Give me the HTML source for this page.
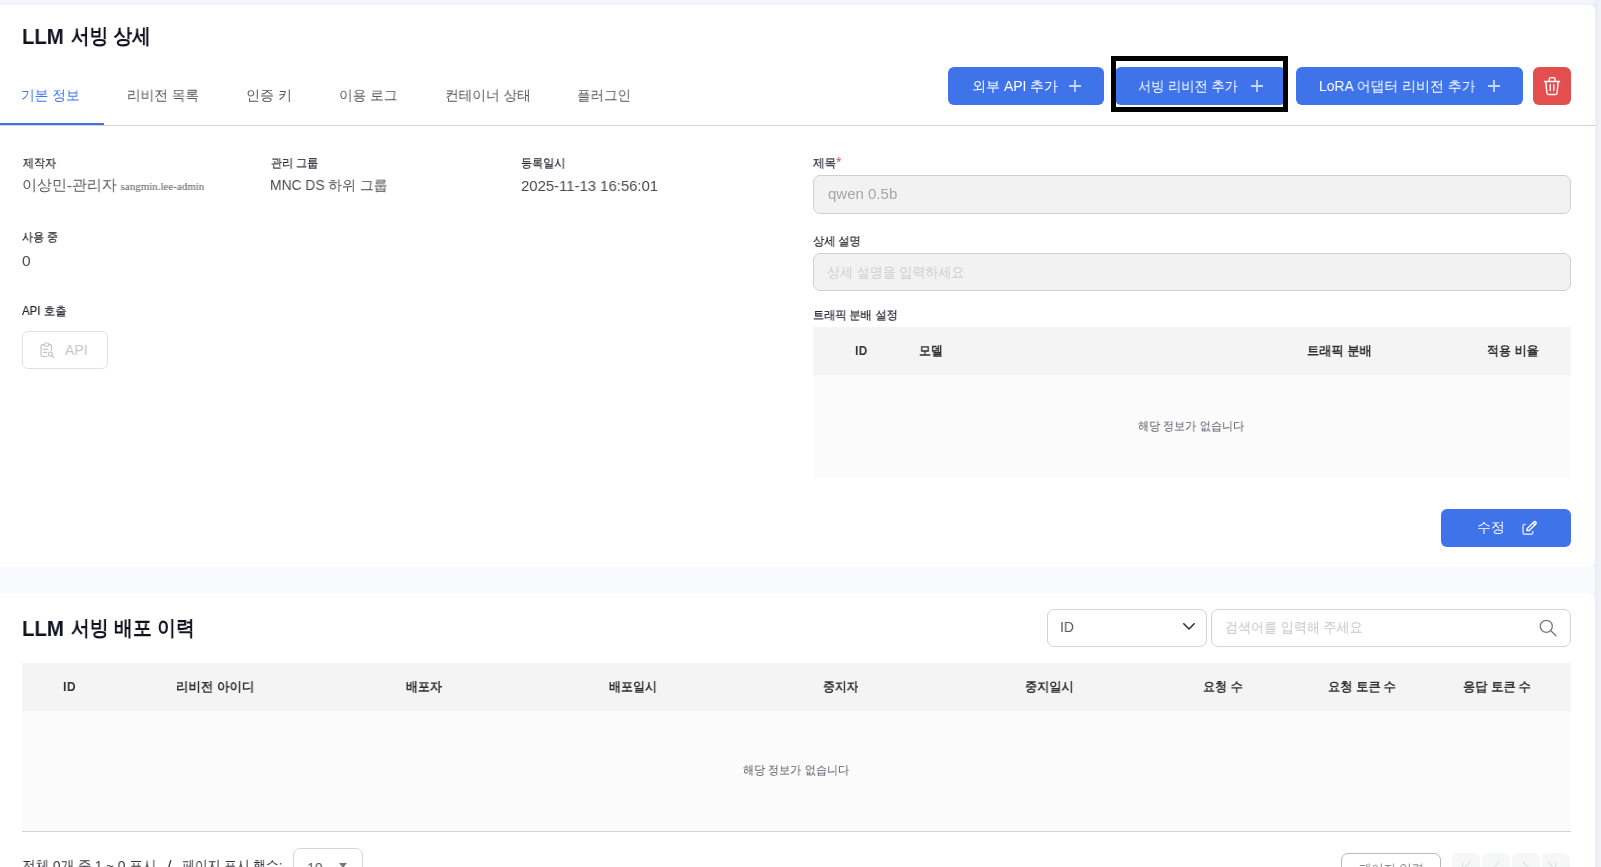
<!DOCTYPE html>
<html><head><meta charset="utf-8">
<style>
*{box-sizing:border-box;margin:0;padding:0}
html,body{width:1601px;height:867px;overflow:hidden;background:#f0f2f7;font-family:"Liberation Sans",sans-serif;color:#222}
.abs{position:absolute}
.t{position:absolute;white-space:nowrap;line-height:1;transform-origin:0 0;will-change:transform}
.lb{-webkit-text-stroke:0.2px currentColor}
.btn{position:absolute;background:#3e73ea;border-radius:6px}
svg{position:absolute;overflow:visible}
</style></head><body>
<div class="abs" style="left:0;top:0;width:1601px;height:5px;background:linear-gradient(#f4f7fc,#eff1f7)"></div>
<div class="abs" style="left:1595px;top:0;width:6px;height:867px;background:linear-gradient(90deg,#eaedf3,#f0f3f8)"></div>
<div class="abs" style="left:0;top:5px;width:1595px;height:562px;background:#fff;border-radius:0 6px 5px 0"></div>
<div class="abs" style="left:0;top:125px;width:1595px;height:1px;background:#d2d2d6"></div>
<div class="abs" style="left:0;top:123px;width:104px;height:2px;background:#3e73ea"></div>
<div class="btn" style="left:948px;top:67px;width:156px;height:38px"></div>
<svg style="left:1069px;top:80px" width="12" height="12"><path d="M6 0V12M0 6H12" stroke="#fff" stroke-opacity="0.72" stroke-width="1.8"/></svg>
<div class="btn" style="left:1115px;top:67px;width:171px;height:38px"></div>
<svg style="left:1251px;top:80px" width="12" height="12"><path d="M6 0V12M0 6H12" stroke="#fff" stroke-opacity="0.72" stroke-width="1.8"/></svg>
<div class="btn" style="left:1296px;top:67px;width:227px;height:38px"></div>
<svg style="left:1488px;top:80px" width="12" height="12"><path d="M6 0V12M0 6H12" stroke="#fff" stroke-opacity="0.72" stroke-width="1.8"/></svg>
<div class="btn" style="left:1533px;top:67px;width:38px;height:38px;background:#e24f4e"></div>
<svg style="left:1533px;top:67px" width="38" height="38" fill="none" stroke="#fff" stroke-width="1.4" stroke-linecap="round" stroke-linejoin="round">
<path d="M11.5 14.5H26.5"/>
<path d="M16.3 14.3V12.2a1.6 1.6 0 0 1 1.6-1.6H20.5a1.6 1.6 0 0 1 1.6 1.6V14.3"/>
<path d="M12.8 14.7L13.9 26a1.6 1.6 0 0 0 1.6 1.5H22.5a1.6 1.6 0 0 0 1.6-1.5L25.2 14.7"/>
<path d="M17.2 17.6V23.6M20.8 17.6V23.6"/>
</svg>
<div class="abs" style="left:22px;top:331px;width:86px;height:38px;border:1px solid #e2e2e6;border-radius:6px"></div>
<svg style="left:36px;top:338px" width="24" height="24" fill="none" stroke="#c2c2c9" stroke-width="1.15" stroke-linecap="round" stroke-linejoin="round">
<path d="M8.4 6.6H6.5a1.5 1.5 0 0 0-1.5 1.5V17a1.5 1.5 0 0 0 1.5 1.5H11"/>
<path d="M12.9 6.6H14a1.5 1.5 0 0 1 1.5 1.5V12.2"/>
<rect x="8.4" y="5" width="4.5" height="3.2" rx="1.2"/>
<path d="M7.5 11.3H11.6M7.5 14.4H10.6"/>
<circle cx="14.4" cy="16" r="2"/>
<path d="M15.9 17.5L17.8 19.4"/>
</svg>
<div class="abs" style="left:813px;top:175px;width:758px;height:39px;background:#f2f2f2;border:1px solid #cfcfd4;border-radius:7px"></div>
<div class="abs" style="left:813px;top:253px;width:758px;height:38px;background:#f2f2f2;border:1px solid #cfcfd4;border-radius:7px"></div>
<div class="abs" style="left:813px;top:327px;width:758px;height:48px;background:#f4f4f4"></div>
<div class="abs" style="left:813px;top:375px;width:758px;height:103px;background:#fbfbfb"></div>
<div class="btn" style="left:1441px;top:509px;width:130px;height:38px"></div>
<svg style="left:1518px;top:516px" width="24" height="24" fill="none" stroke="#fff" stroke-width="1.4" stroke-linecap="round" stroke-linejoin="round">
<path d="M7.3 8.4H6.4a1.4 1.4 0 0 0-1.4 1.4V16.8a1.4 1.4 0 0 0 1.4 1.4H13.4a1.4 1.4 0 0 0 1.4-1.4V15.4" stroke-opacity="0.78"/>
<path d="M15 6.9L16.9 8.8"/>
<path d="M9 14.6L9.3 12.6L15.9 6a1.3 1.3 0 0 1 1.9 1.9L11.2 14.5Z"/>
</svg>
<div class="abs" style="left:0;top:567px;width:1595px;height:26px;background:#f8fafe"></div>
<div class="abs" style="left:0;top:593px;width:1595px;height:274px;background:#fff;border-radius:0 6px 0 0"></div>
<div class="abs" style="left:1047px;top:609px;width:160px;height:38px;border:1px solid #d3d3d6;border-radius:7px"></div>
<svg style="left:1183px;top:623px" width="12" height="7" fill="none" stroke="#333" stroke-width="1.6" stroke-linecap="round" stroke-linejoin="round"><path d="M0.8 0.8L6 6L11.2 0.8"/></svg>
<div class="abs" style="left:1211px;top:609px;width:360px;height:38px;border:1px solid #d3d3d6;border-radius:7px"></div>
<svg style="left:1536px;top:616px" width="24" height="24" fill="none" stroke="#7c7c80" stroke-width="1.35" stroke-linecap="round"><circle cx="10.3" cy="10.3" r="6"/><path d="M14.6 14.6L20 19.7"/></svg>
<div class="abs" style="left:22px;top:663px;width:1549px;height:48px;background:#f4f4f4"></div>
<div class="abs" style="left:22px;top:711px;width:1549px;height:120px;background:#fbfbfb"></div>
<div class="abs" style="left:22px;top:831px;width:1549px;height:1px;background:#d2d2d6"></div>
<div class="abs" style="left:293px;top:848px;width:70px;height:40px;border:1px solid #d5d5d8;border-radius:7px"></div>
<svg style="left:338px;top:862px" width="12" height="8"><path d="M1 1H9L5 6Z" fill="#777"/></svg>
<div class="abs" style="left:1341px;top:853px;width:100px;height:40px;border:1px solid #b8b8bc;border-radius:7px"></div>
<div class="abs" style="left:1452px;top:853px;width:28px;height:30px;background:#f6f7f7;border-radius:6px"></div>
<div class="abs" style="left:1482px;top:853px;width:28px;height:30px;background:#f6f7f7;border-radius:6px"></div>
<div class="abs" style="left:1512px;top:853px;width:28px;height:30px;background:#f6f7f7;border-radius:6px"></div>
<div class="abs" style="left:1542px;top:853px;width:28px;height:30px;background:#f6f7f7;border-radius:6px"></div>
<div class="abs" style="left:1111px;top:56px;width:177px;height:56px;border:5px solid #000"></div>

<svg style="left:1452px;top:853px" width="120" height="20" fill="none" stroke="#e3e4e6" stroke-width="1.4" stroke-linecap="round" stroke-linejoin="round">
<path d="M10.5 9V20M18 9L13 14L18 19"/>
<path d="M47 9L42 14L47 19"/>
<path d="M71 9L76 14L71 19"/>
<path d="M96 9L101 14L96 19M103.5 9V20"/>
</svg>

<div class="t" id="title1" style="left:22.10px;top:26.00px;font-size:22.5px;font-weight:bold;color:#12121f;transform:scaleX(0.9015);">LLM</div>
<div class="t" id="title1b" style="left:71.00px;top:24.50px;font-size:21px;font-weight:bold;color:#12121f;transform:scaleX(0.8865);">서빙 상세</div>
<div class="t" id="tab1" style="left:21.42px;top:88.00px;font-size:14px;color:#3e73ea;transform:scaleX(0.9764);">기본 정보</div>
<div class="t" id="tab2" style="left:127.03px;top:88.00px;font-size:14px;color:#55555c;transform:scaleX(0.9728);">리비전 목록</div>
<div class="t" id="tab3" style="left:246.00px;top:88.00px;font-size:14px;color:#55555c;">인증 키</div>
<div class="t" id="tab4" style="left:338.61px;top:88.00px;font-size:14px;color:#55555c;transform:scaleX(0.9734);">이용 로그</div>
<div class="t" id="tab5" style="left:444.61px;top:88.00px;font-size:14px;color:#55555c;transform:scaleX(0.9748);">컨테이너 상태</div>
<div class="t" id="tab6" style="left:577.04px;top:88.00px;font-size:14px;color:#55555c;transform:scaleX(0.9638);">플러그인</div>
<div class="t" id="b1" style="left:971.59px;top:79.00px;font-size:14px;color:#fff;">외부 API 추가</div>
<div class="t" id="b2" style="left:1138.25px;top:79.00px;font-size:14px;color:#fff;transform:scaleX(0.9415);">서빙 리비전 추가</div>
<div class="t" id="b3" style="left:1319.41px;top:79.00px;font-size:14px;color:#fff;transform:scaleX(0.9904);">LoRA 어댑터 리비전 추가</div>
<div class="t lb" id="l1" style="left:22.51px;top:157.00px;font-size:12px;color:#242430;transform:scaleX(0.9199);">제작자</div>
<div class="t" id="v1" style="left:21.50px;top:178.00px;font-size:15px;color:#58585e;font-family:'Liberation Serif',serif;transform:scaleX(0.9975);">이상민-관리자 <span style="font-size:11px;font-family:'Liberation Serif',serif">sangmin.lee-admin</span></div>
<div class="t lb" id="l2" style="left:271.00px;top:157.00px;font-size:12px;color:#242430;transform:scaleX(0.9267);">관리 그룹</div>
<div class="t" id="v2" style="left:270.49px;top:178.00px;font-size:14px;color:#4a4a4f;transform:scaleX(0.9874);">MNC DS 하위 그룹</div>
<div class="t lb" id="l3" style="left:520.61px;top:157.00px;font-size:12px;color:#242430;transform:scaleX(0.9240);">등록일시</div>
<div class="t" id="v3" style="left:520.60px;top:178.00px;font-size:15px;color:#4a4a4f;transform:scaleX(0.9922);">2025-11-13 16:56:01</div>
<div class="t lb" id="l4" style="left:22.00px;top:231.00px;font-size:12px;color:#242430;transform:scaleX(0.9231);">사용 중</div>
<div class="t" id="v4" style="left:22.00px;top:252.50px;font-size:15px;color:#4a4a4f;transform:scaleX(1.0367);">0</div>
<div class="t lb" id="l5" style="left:21.93px;top:305.00px;font-size:12px;color:#242430;transform:scaleX(0.9497);">API 호출</div>
<div class="t" id="apit" style="left:64.79px;top:342.00px;font-size:15px;color:#c4c4ca;transform:scaleX(0.9374);">API</div>
<div class="t lb" id="l6" style="left:813.13px;top:157.00px;font-size:12px;color:#242430;transform:scaleX(0.9639);">제목<span style="color:#e24f4e;font-size:14px;line-height:0;-webkit-text-stroke:0">*</span></div>
<div class="t" id="qwen" style="left:827.50px;top:185.50px;font-size:15px;color:#a6a6ab;">qwen 0.5b</div>
<div class="t lb" id="l7" style="left:813.30px;top:235.00px;font-size:12px;color:#242430;transform:scaleX(0.9344);">상세 설명</div>
<div class="t" id="ph1" style="left:827.07px;top:265.00px;font-size:14px;color:#cdcdd2;transform:scaleX(0.9281);">상세 설명을 입력하세요</div>
<div class="t lb" id="l8" style="left:813.40px;top:309.00px;font-size:12px;color:#242430;transform:scaleX(0.9314);">트래픽 분배 설정</div>
<div class="t" id="th1" style="left:855.00px;top:344.00px;font-size:13px;font-weight:bold;color:#2e2e33;letter-spacing:0.6px;transform:scaleX(0.8926);">ID</div>
<div class="t" id="th2" style="left:919.10px;top:344.00px;font-size:13px;font-weight:bold;color:#2e2e33;transform:scaleX(0.9168);">모델</div>
<div class="t" id="th3" style="left:1307.18px;top:344.00px;font-size:13px;font-weight:bold;color:#2e2e33;transform:scaleX(0.9387);">트래픽 분배</div>
<div class="t" id="th4" style="left:1486.60px;top:344.00px;font-size:13px;font-weight:bold;color:#2e2e33;transform:scaleX(0.9219);">적용 비율</div>
<div class="t" id="e1" style="left:1138.40px;top:420.00px;font-size:12px;color:#5a5a64;transform:scaleX(0.9233);">해당 정보가 없습니다</div>
<div class="t" id="edit" style="left:1476.90px;top:519.50px;font-size:14px;color:#fff;transform:scaleX(0.9948);">수정</div>
<div class="t" id="title2" style="left:22.20px;top:618.00px;font-size:22.5px;font-weight:bold;color:#12121f;transform:scaleX(0.9056);">LLM</div>
<div class="t" id="title2b" style="left:71.00px;top:616.50px;font-size:21px;font-weight:bold;color:#12121f;transform:scaleX(0.8971);">서빙 배포 이력</div>
<div class="t" id="selid" style="left:1060.36px;top:619.00px;font-size:15px;color:#55555f;transform:scaleX(0.9189);">ID</div>
<div class="t" id="ph2" style="left:1224.86px;top:620.00px;font-size:14px;color:#c6c6cc;transform:scaleX(0.9294);">검색어를 입력해 주세요</div>
<div class="t" id="h1" style="left:63.42px;top:680.00px;font-size:13px;font-weight:bold;color:#2e2e33;letter-spacing:0.6px;transform:scaleX(0.9240);">ID</div>
<div class="t" id="h2" style="left:176.19px;top:680.00px;font-size:13px;font-weight:bold;color:#2e2e33;transform:scaleX(0.9558);">리비전 아이디</div>
<div class="t" id="h3" style="left:406.00px;top:680.00px;font-size:13px;font-weight:bold;color:#2e2e33;transform:scaleX(0.9185);">배포자</div>
<div class="t" id="h4" style="left:608.60px;top:680.00px;font-size:13px;font-weight:bold;color:#2e2e33;transform:scaleX(0.9238);">배포일시</div>
<div class="t" id="h5" style="left:823.00px;top:680.00px;font-size:13px;font-weight:bold;color:#2e2e33;transform:scaleX(0.9085);">중지자</div>
<div class="t" id="h6" style="left:1025.00px;top:680.00px;font-size:13px;font-weight:bold;color:#2e2e33;transform:scaleX(0.9357);">중지일시</div>
<div class="t" id="h7" style="left:1203.00px;top:680.00px;font-size:13px;font-weight:bold;color:#2e2e33;transform:scaleX(0.9245);">요청 수</div>
<div class="t" id="h8" style="left:1327.80px;top:680.00px;font-size:13px;font-weight:bold;color:#2e2e33;transform:scaleX(0.9416);">요청 토큰 수</div>
<div class="t" id="h9" style="left:1463.00px;top:680.00px;font-size:13px;font-weight:bold;color:#2e2e33;transform:scaleX(0.9416);">응답 토큰 수</div>
<div class="t" id="e2" style="left:743.10px;top:764.00px;font-size:12px;color:#5a5a64;transform:scaleX(0.9233);">해당 정보가 없습니다</div>
<div class="t" id="foot1" style="left:22.10px;top:858.00px;font-size:15px;color:#333338;transform:scaleX(0.9016);">전체 0개 중 1 ~ 0 표시</div>
<div class="t" id="foot2" style="left:166.64px;top:858.00px;font-size:15px;color:#333338;transform:scaleX(1.0725);">/</div>
<div class="t" id="foot3" style="left:181.90px;top:858.00px;font-size:15px;color:#333338;transform:scaleX(0.8560);">페이지 표시 행수:</div>
<div class="t" id="ten" style="left:306.83px;top:860.00px;font-size:15px;color:#555;transform:scaleX(0.9462);">10</div>
<div class="t" id="pgin" style="left:1358.80px;top:862.00px;font-size:14px;color:#888;transform:scaleX(0.8782);">페이지 입력</div>
</body></html>
